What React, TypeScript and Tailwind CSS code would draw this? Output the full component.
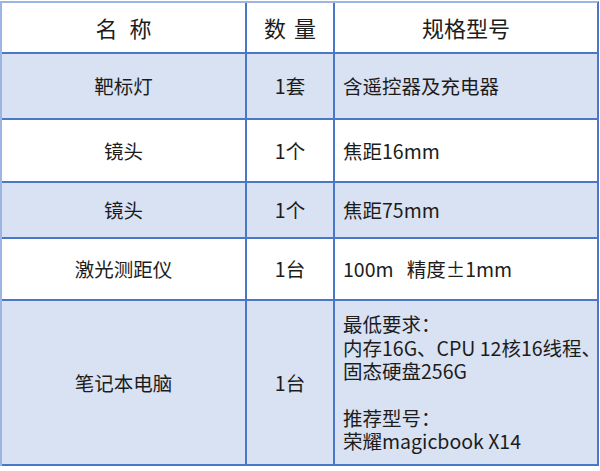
import React from "react";

const rows: { name: string; qty: string; spec: React.ReactNode; h: string; fill: boolean }[] = [
  { name: "靶标灯", qty: "1套", spec: "含遥控器及充电器", h: "h-[66px]", fill: true },
  { name: "镜头", qty: "1个", spec: "焦距16mm", h: "h-[63px]", fill: false },
  { name: "镜头", qty: "1个", spec: "焦距75mm", h: "h-[56px]", fill: true },
  { name: "激光测距仪", qty: "1台", spec: <span className="whitespace-pre">{"100m   精度±1mm"}</span>, h: "h-[62px]", fill: false },
  {
    name: "笔记本电脑",
    qty: "1台",
    spec: (
      <div className="leading-[23.4px]">
        <div>最低要求：</div>
        <div className="whitespace-nowrap">内存16G、CPU 12核16线程、</div>
        <div>固态硬盘256G</div>
        <div>&nbsp;</div>
        <div>推荐型号：</div>
        <div>荣耀magicbook X14</div>
      </div>
    ),
    h: "h-[165px]",
    fill: true,
  },
];

export default function App() {
  return (
    <div
      className="w-[600px] h-[471px] bg-white text-[#1c1c1c] pt-[1px]"
      style={{ fontFamily: '"Noto Sans CJK SC", "Noto Sans", sans-serif' }}
    >
      <div className="w-[599px] border-t-2 border-l-2 border-t-[#9db5e3] border-l-[#9db5e3] border-r-2 border-r-[#4a78c8]">
        <div className="grid grid-cols-[245px_88px_1fr] h-[51px] border-b-2 border-[#4a78c8] bg-white text-[22px]">
          <div className="flex items-center justify-center gap-[12px] border-r-2 border-[#4a78c8]">
            <span>名</span>
            <span>称</span>
          </div>
          <div className="flex items-center justify-center gap-[8px] border-r-2 border-[#4a78c8]">
            <span>数</span>
            <span>量</span>
          </div>
          <div className="flex items-center justify-center">规格型号</div>
        </div>
        {rows.map((r, i) => (
          <div
            key={i}
            className={`grid grid-cols-[245px_88px_1fr] ${r.h} border-b-2 border-[#4a78c8] ${r.fill ? "bg-[#d9e2f3]" : "bg-white"} text-[19.5px]`}
          >
            <div className="flex items-center justify-center border-r-2 border-[#4a78c8]">{r.name}</div>
            <div className="flex items-center justify-center border-r-2 border-[#4a78c8]">{r.qty}</div>
            <div className="flex items-center pl-[8px] overflow-visible">{r.spec}</div>
          </div>
        ))}
      </div>
    </div>
  );
}
